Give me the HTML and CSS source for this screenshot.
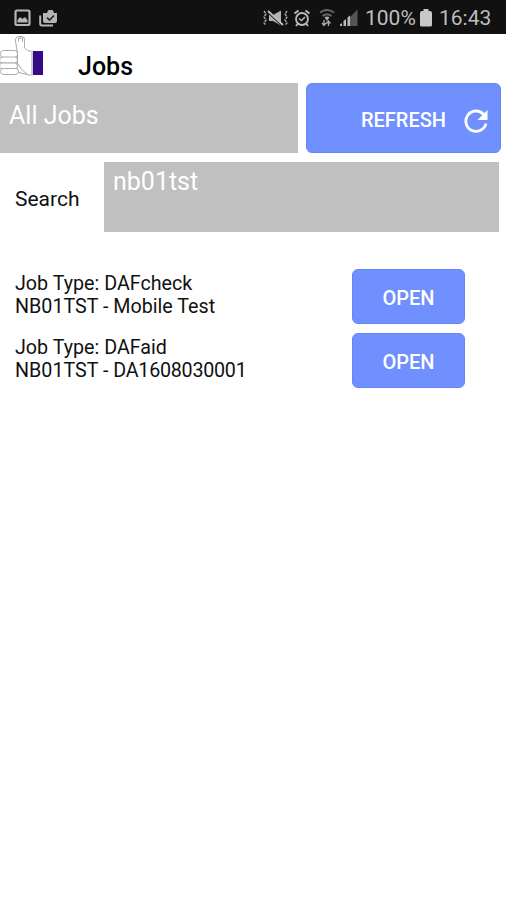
FILE: index.html
```
<!DOCTYPE html>
<html lang="en">
<head>
    <meta charset="UTF-8">
    <meta name="viewport" content="width=device-width, initial-scale=1.0">
    <title>Jobs</title>
    <link rel="stylesheet" href="styles.css">
</head>
<body>

    <div class="status-bar">
        <svg class="picture" width="17" height="18" viewBox="0 0 17 18">
            <rect x="1.500" y="1.500" width="14" height="14.500" rx="1.500" fill="none" stroke="#b4b4b4" stroke-width="2.200"/>
            <path d="M3.500 13.500V11l2-2.500h1.500l1.500 1.500L10 8.500h1.500l2 2.500v2.500z" fill="#b4b4b4"/>
        </svg>
        <svg class="briefcase" width="19" height="18" viewBox="0 0 19 18">
            <path d="M1.200 6.500v8.300q0 1.700 1.700 1.700H14" fill="none" stroke="#b4b4b4" stroke-width="2"/>
            <path d="M4 4h4l1-2.500Q9.300 1 10 1h3q.700 0 1 .500L15 4h3v8q0 2-2 2H6q-2 0-2-2z" fill="#b4b4b4"/>
            <path d="M8 8.500l2.500 2.500 4.500-4.500" fill="none" stroke="#222" stroke-width="1.600"/>
        </svg>
        <svg class="vibrate" width="27" height="18" viewBox="0 0 27 18">
            <path d="M2 2l2 3-2 3 2 3-2 3 2 2M25 2l-2 3 2 3-2 3 2 3-2 2" fill="none" stroke="#aaa" stroke-width="1.400" stroke-dasharray="2.500 1"/>
            <path d="M7 6h4l8-4.500v15L11 12H7z" fill="#b4b4b4"/>
            <path d="M6 3.500l15 14" stroke="#111" stroke-width="1.500"/>
            <path d="M6 2l15 14" stroke="#bbb" stroke-width="2"/>
        </svg>
        <svg class="alarm" width="18" height="18" viewBox="0 0 18 18">
            <circle cx="9" cy="10" r="6" fill="none" stroke="#bbb" stroke-width="1.800"/>
            <path d="M1.500 4.500l4-3M16.500 4.500l-4-3M4.500 15L3 17M13.500 15l1.500 2" stroke="#bbb" stroke-width="1.800"/>
            <path d="M6 9.500l2.500 2 3.500-3.500" fill="none" stroke="#bbb" stroke-width="1.500"/>
        </svg>
        <svg class="wifi" width="16" height="18" viewBox="0 0 16 18">
            <path d="M1 3.500q7-5 14 0M3.500 7q4.500-3.500 9 0" fill="none" stroke="#666" stroke-width="1.900"/>
            <path d="M5.500 8.500q2.500-2 5 0L8 12z" fill="#aaa"/>
            <path d="M5 11v5M3 14l2 2.500L7 14M9.500 17v-4M7.500 14.500l2-2.500 2 2.500" fill="none" stroke="#aaa" stroke-width="1.300"/>
        </svg>
        <svg class="signal" width="18" height="18" viewBox="0 0 18 18">
            <path d="M9 17V9l8.500-8.500V17z" fill="#555"/>
            <path d="M0 17v-1.500L2 14v3zM3.500 17v-5L6 10v7zM7.500 17V8.500L10 6.500V17z" fill="#bbb"/>
        </svg>
        <span class="percent">100%</span>
        <svg class="battery" width="12" height="18" viewBox="0 0 12 18">
            <path d="M3.500 2V0h5v2H10q2 0 2 2v12q0 1.500-1.500 1.500h-9Q0 17.500 0 16V4q0-2 2-2z" fill="#c8c8c8"/>
        </svg>
        <span class="clock">16:43</span>
    </div>

    <div class="header">
        <svg class="logo" width="44" height="42" viewBox="0 0 44 42">
            <g fill="#fff" stroke="#aaa" stroke-width="1">
                <path d="M17 16L15.500 7q-.500-4 3.500-4.500h3q3 0 2.500 4V14l3 2.500 5 1V41H29L17 38z"/>
                <rect x=".500" y="16.500" width="17" height="7" rx="3"/>
                <rect x="-.500" y="23" width="18" height="6" rx="3"/>
                <rect x="-.500" y="29" width="18" height="6" rx="3"/>
                <rect x=".500" y="34.500" width="18" height="6" rx="3"/>
                <path d="M17.500 17v12q3 7 10 11.500M18.500 7.500V4h4v4" fill="none"/>
            </g>
            <rect x="31" y="17" width="2" height="24" fill="#ccc"/>
            <rect x="33" y="17" width="10" height="24" fill="#360b87"/>
        </svg>
        <h1>Jobs</h1>
    </div>

    <div class="toolbar">
        <div class="filter">All Jobs</div>
        <button class="refresh">
            REFRESH
            <svg width="24" height="24" viewBox="0 0 24 24">
                <path d="M22 14.500A10.200 10.200 0 1 1 19.500 5.200" fill="none" stroke="#fff" stroke-width="2.800"/>
                <path d="M23.500 1v10H13.500z" fill="#fff"/>
            </svg>
        </button>
    </div>

    <div class="search">
        <label for="search">Search</label>
        <input type="text" id="search" value="nb01tst">
    </div>

    <div class="jobs">
        <div class="job">
            <p>Job Type: DAFcheck<br>NB01TST - Mobile Test</p>
            <button>OPEN</button>
        </div>
        <div class="job">
            <p>Job Type: DAFaid<br>NB01TST - <span class="number">DA1608030001</span></p>
            <button>OPEN</button>
        </div>
    </div>

</body>
</html>
```
FILE: styles.css
```
body {
    font-family: Roboto, sans-serif;
    margin: 0;
    background-color: white;
    color: #111;
}
.status-bar {
    display: flex;
    align-items: center;
    box-sizing: border-box;
    height: 34px;
    padding: 2px 0 0 14px;
    background-color: #111;
    color: #bebebe;
    font-size: 21px;
}
.briefcase {
    margin-left: 8px;
}
.vibrate {
    margin-left: 204px;
}
.alarm {
    margin-left: 4px;
}
.wifi {
    margin-left: 8px;
}
.signal {
    margin-left: 5px;
}
.percent {
    width: 51px;
    margin-left: 7px;
}
.battery {
    margin-left: 4px;
}
.clock {
    margin-left: 7px;
}
.header {
    display: flex;
    height: 49px;
}
h1 {
    margin: 18px 0 0 34px;
    color: black;
    font-size: 25px;
    font-weight: 500;
    line-height: 30px;
}
.toolbar {
    display: flex;
    gap: 8px;
    height: 70px;
    padding-right: 5px;
}
.filter {
    width: 298px;
    box-sizing: border-box;
    padding-left: 9px;
    background-color: #c0c0c0;
    color: white;
    font-size: 25px;
    line-height: 65px;
}
button {
    border: 1px solid #6686f8;
    border-radius: 6px;
    background-color: #7090ff;
    color: white;
    font-family: Roboto, sans-serif;
    font-size: 20px;
    font-weight: 500;
    cursor: pointer;
}
.refresh {
    display: flex;
    flex: 1;
    align-items: center;
    justify-content: flex-end;
    gap: 18px;
    padding: 3px 12px 0 0;
}
.refresh svg {
    margin-top: 3px;
}
.search {
    display: flex;
    height: 70px;
    margin-top: 9px;
    padding: 0 7px 0 15px;
}
label {
    width: 89px;
    font-size: 21px;
    line-height: 74px;
}
input {
    flex: 1;
    min-width: 0;
    box-sizing: border-box;
    padding: 0 9px 32px;
    border: none;
    border-radius: 0;
    background-color: #c0c0c0;
    color: white;
    font-family: Roboto, sans-serif;
    font-size: 25px;
}
.jobs {
    display: grid;
    gap: 9px;
    margin-top: 37px;
}
.job {
    display: flex;
    height: 55px;
    padding-left: 15px;
}
.job p {
    width: 337px;
    margin: 3px 0 0;
    font-size: 19.7px;
    line-height: 23px;
}
.number {
    letter-spacing: -0.25px;
}
.job button {
    width: 113px;
    padding: 3px 0 0;
}
```
